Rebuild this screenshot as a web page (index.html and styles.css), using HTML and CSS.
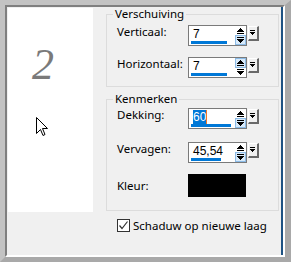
FILE: index.html
```html
<!DOCTYPE html>
<html>

<head>
    <title>Slagschaduw</title>
    <link rel="stylesheet" href="styles.css">
</head>

<body>
    <div class="frame">
        <div class="dialog">
            <div class="preview">
                <span class="digit">2</span>
                <svg class="cursor" width="12" height="20" viewBox="0 0 12 20">
                    <path d="M0.5 0.5 L0.5 16.5 L4.5 12.5 L7 18.5 L9 17.5 L6.5 11.5 L11.5 11.5 Z" fill="#fff" stroke="#000" stroke-width="1" />
                </svg>
            </div>

            <div class="settings">
                <fieldset class="group">
                    <legend>Verschuiving</legend>
                    <div class="row">
                        <label>Verticaal:</label>
                        <div class="spin">
                            <div class="field">
                                <span class="value">7</span>
                                <span class="bar" style="width: 36px;"></span>
                            </div>
                            <svg class="arrows" width="11" height="19" viewBox="0 0 11 19" shape-rendering="crispEdges">
                                <rect x="0.5" y="9.5" width="10" height="9" fill="#d8eafa" stroke="#8cbbe6" />
                                <rect x="5" y="2" width="1" height="1" /><rect x="4" y="3" width="3" height="1" /><rect x="3" y="4" width="5" height="1" /><rect x="2" y="5" width="7" height="1" /><rect x="2" y="7" width="7" height="1" />
                                <rect x="2" y="11" width="7" height="1" /><rect x="2" y="13" width="7" height="1" /><rect x="3" y="14" width="5" height="1" /><rect x="4" y="15" width="3" height="1" /><rect x="5" y="16" width="1" height="1" />
                            </svg>
                        </div>
                        <div class="drop">
                            <svg width="8" height="11" viewBox="0 0 8 11" shape-rendering="crispEdges">
                                <rect x="1" y="3" width="5" height="1" /><rect x="1" y="5" width="5" height="1" /><rect x="2" y="6" width="3" height="1" /><rect x="3" y="7" width="1" height="1" />
                            </svg>
                        </div>
                    </div>
                    <div class="row">
                        <label>Horizontaal:</label>
                        <div class="spin">
                            <div class="field">
                                <span class="value">7</span>
                                <span class="bar" style="width: 36px;"></span>
                            </div>
                            <svg class="arrows" width="11" height="19" viewBox="0 0 11 19" shape-rendering="crispEdges">
                                <rect x="0.5" y="0.5" width="10" height="9" fill="#d8eafa" stroke="#8cbbe6" />
                                <rect x="5" y="2" width="1" height="1" /><rect x="4" y="3" width="3" height="1" /><rect x="3" y="4" width="5" height="1" /><rect x="2" y="5" width="7" height="1" /><rect x="2" y="7" width="7" height="1" />
                                <rect x="2" y="11" width="7" height="1" /><rect x="2" y="13" width="7" height="1" /><rect x="3" y="14" width="5" height="1" /><rect x="4" y="15" width="3" height="1" /><rect x="5" y="16" width="1" height="1" />
                            </svg>
                        </div>
                        <div class="drop">
                            <svg width="8" height="11" viewBox="0 0 8 11" shape-rendering="crispEdges">
                                <rect x="1" y="3" width="5" height="1" /><rect x="1" y="5" width="5" height="1" /><rect x="2" y="6" width="3" height="1" /><rect x="3" y="7" width="1" height="1" />
                            </svg>
                        </div>
                    </div>
                </fieldset>

                <fieldset class="group second">
                    <legend>Kenmerken</legend>
                    <div class="row">
                        <label>Dekking:</label>
                        <div class="spin">
                            <div class="field">
                                <span class="value"><span class="selected">60</span><span class="caret"></span></span>
                                <span class="bar" style="width: 40px;"></span>
                            </div>
                            <svg class="arrows" width="11" height="19" viewBox="0 0 11 19" shape-rendering="crispEdges">
                                <rect x="0.5" y="9.5" width="10" height="9" fill="#d8eafa" stroke="#8cbbe6" />
                                <rect x="5" y="2" width="1" height="1" /><rect x="4" y="3" width="3" height="1" /><rect x="3" y="4" width="5" height="1" /><rect x="2" y="5" width="7" height="1" /><rect x="2" y="7" width="7" height="1" />
                                <rect x="2" y="11" width="7" height="1" /><rect x="2" y="13" width="7" height="1" /><rect x="3" y="14" width="5" height="1" /><rect x="4" y="15" width="3" height="1" /><rect x="5" y="16" width="1" height="1" />
                            </svg>
                        </div>
                        <div class="drop">
                            <svg width="8" height="11" viewBox="0 0 8 11" shape-rendering="crispEdges">
                                <rect x="1" y="3" width="5" height="1" /><rect x="1" y="5" width="5" height="1" /><rect x="2" y="6" width="3" height="1" /><rect x="3" y="7" width="1" height="1" />
                            </svg>
                        </div>
                    </div>
                    <div class="row gap-wide">
                        <label>Vervagen:</label>
                        <div class="spin">
                            <div class="field">
                                <span class="value">45,54</span>
                                <span class="bar" style="width: 30px;"></span>
                            </div>
                            <svg class="arrows" width="11" height="19" viewBox="0 0 11 19" shape-rendering="crispEdges">
                                <rect x="0.5" y="9.5" width="10" height="9" fill="#d8eafa" stroke="#8cbbe6" />
                                <rect x="5" y="2" width="1" height="1" /><rect x="4" y="3" width="3" height="1" /><rect x="3" y="4" width="5" height="1" /><rect x="2" y="5" width="7" height="1" /><rect x="2" y="7" width="7" height="1" />
                                <rect x="2" y="11" width="7" height="1" /><rect x="2" y="13" width="7" height="1" /><rect x="3" y="14" width="5" height="1" /><rect x="4" y="15" width="3" height="1" /><rect x="5" y="16" width="1" height="1" />
                            </svg>
                        </div>
                        <div class="drop">
                            <svg width="8" height="11" viewBox="0 0 8 11" shape-rendering="crispEdges">
                                <rect x="1" y="3" width="5" height="1" /><rect x="1" y="5" width="5" height="1" /><rect x="2" y="6" width="3" height="1" /><rect x="3" y="7" width="1" height="1" />
                            </svg>
                        </div>
                    </div>
                    <div class="row color-row">
                        <label>Kleur:</label>
                        <div class="swatch"></div>
                    </div>
                </fieldset>

                <label class="check">
                    <span class="box">
                        <svg width="11" height="11" viewBox="0 0 11 11">
                            <path d="M1.5 5.5 L4 8.5 L9.5 1.5" fill="none" stroke="#333" stroke-width="1.2" />
                        </svg>
                    </span>
                    Schaduw op nieuwe laag
                </label>
            </div>
        </div>
    </div>
</body>

</html>
```

FILE: styles.css
```css
* {
    box-sizing: border-box;
}

body {
    margin: 0;
    width: 291px;
    height: 262px;
    border-style: solid;
    border-width: 5px 6px 5px 5px;
    border-color: #c3c3c3 #a9a9a9 #a9a9a9 #c3c3c3;
    background-color: #c3c3c3;
    font-family: "Noto Sans", sans-serif;
    font-size: 11.5px;
    color: #000;
}

.frame {
    height: 100%;
    display: flex;
    border-style: solid;
    border-width: 2px;
    border-color: #7f7f7f #ffffff #ffffff #7f7f7f;
}

.dialog {
    flex: 1;
    display: flex;
    background-color: #f0f0f0;
    border-right: 2px solid #1d5283;
}

.preview {
    width: 85px;
    height: 204px;
    margin: 1px 0 0 1px;
    padding: 35px 0 0 24px;
    background-color: #ffffff;
    display: flex;
    flex-direction: column;
    align-items: flex-start;
}

.digit {
    font-family: "Liberation Serif", serif;
    font-style: italic;
    font-size: 44px;
    line-height: 44px;
    height: 44px;
    color: #7a7a7a;
}

.cursor {
    display: block;
    margin: 30px 0 0 4px;
}

.settings {
    width: 173px;
    margin-left: 13px;
}

.group {
    margin: 0;
    padding: 4px 0 8px 6px;
    border: 1px solid #dcdcdc;
}

.group legend {
    padding: 0 2px;
    line-height: 14px;
}

.second {
    margin-top: 5px;
    padding: 2px 0 13px 6px;
}

.row {
    display: flex;
    align-items: flex-start;
    height: 21px;
    padding-left: 4px;
}

.row + .row {
    margin-top: 11px;
}

.row.gap-wide {
    margin-top: 13px;
}

.row label {
    width: 71px;
    line-height: 16px;
    margin-top: -1px;
}

.spin {
    display: flex;
    width: 59px;
    height: 21px;
    border: 1px solid #7a7a7a;
    background-color: #ffffff;
}

.field {
    flex: 1;
    display: flex;
    flex-direction: column;
    align-items: flex-start;
    padding: 1px 0 1px 2px;
}

.value {
    display: flex;
    font-family: "Liberation Sans", Arial, sans-serif;
    font-size: 12px;
    line-height: 14px;
    padding-left: 2px;
}

.selected {
    background-color: #0078d7;
    color: #ffffff;
}

.caret {
    width: 1px;
    background-color: #f07a28;
}

.bar {
    height: 3px;
    margin-top: auto;
    background-color: #0078d7;
}

.arrows {
    display: block;
}

.drop {
    width: 11px;
    height: 15px;
    margin: 1px 0 0 1px;
    display: flex;
    justify-content: center;
    background-color: #f0f0f0;
    border-style: solid;
    border-width: 1px 2px 2px 1px;
    border-color: #ffffff #696969 #696969 #ffffff;
}

.drop svg {
    display: block;
}

.color-row {
    height: 23px;
    align-items: center;
}

.color-row label {
    margin-top: 0;
}

.swatch {
    width: 58px;
    height: 23px;
    background-color: #000000;
}

.check {
    display: flex;
    align-items: center;
    margin: 8px 0 0 11px;
    line-height: 13px;
}

.box {
    width: 13px;
    height: 13px;
    margin-right: 3px;
    border: 1px solid #333333;
    background-color: #ffffff;
}

.box svg {
    display: block;
}
```
